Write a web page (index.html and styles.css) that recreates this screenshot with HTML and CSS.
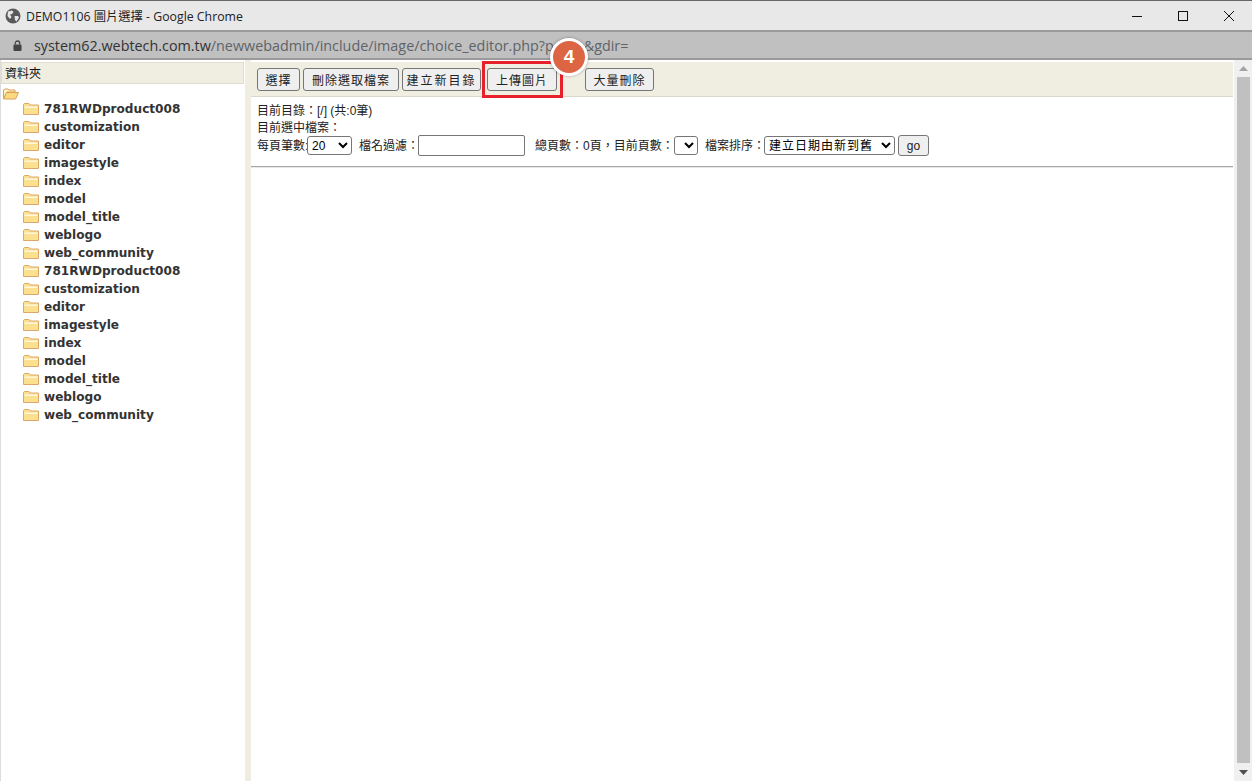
FILE: index.html
```html
<!DOCTYPE html>
<html lang="zh-TW">
<head>
    <meta charset="UTF-8">
    <title>DEMO1106 圖片選擇 - Google Chrome</title>
    <link rel="stylesheet" href="styles.css">
</head>
<body>
    <!-- window title -->
    <header class="titlebar">
        <svg class="globe" width="16" height="16" viewBox="0 0 16 16">
            <circle cx="8" cy="8" r="7.5" fill="#5a5a5a"/>
            <path d="M3 3.5 L7 2.5 L8.5 4 L7 6 L5 6.5 L6.5 9 L5 11 L2.5 8 Z M9.5 8 L13 8 L14 9.5 L11.5 13.5 L10 12 Z" fill="#e6e6e6"/>
        </svg>
        <span class="title-text">DEMO1106 圖片選擇 - Google Chrome</span>
        <div class="win-btns">
            <svg width="12" height="12" viewBox="0 0 12 12"><path d="M1 6.5H11" stroke="#111" fill="none"/></svg>
            <svg width="12" height="12" viewBox="0 0 12 12"><rect x="1.5" y="1.5" width="9" height="9" stroke="#111" fill="none"/></svg>
            <svg width="12" height="12" viewBox="0 0 12 12"><path d="M1 1L11 11M11 1L1 11" stroke="#111" fill="none"/></svg>
        </div>
    </header>

    <!-- address bar -->
    <div class="urlbar">
        <svg width="9" height="11" viewBox="0 0 10 12">
            <path d="M2.5 5V3.5a2.5 2.5 0 0 1 5 0V5" stroke="#444" stroke-width="1.4" fill="none"/>
            <rect x="0.5" y="5" width="9" height="7" rx="1" fill="#444"/>
        </svg>
        <span class="url"><span class="host">system62.webtech.com.tw</span>/newwebadmin/include/image/choice_editor.php?para=&amp;gdir=</span>
    </div>

    <div class="frames">
        <!-- folder tree -->
        <aside class="sidebar">
            <div class="side-head">資料夾</div>
            <svg class="root-folder" width="16" height="12" viewBox="0 0 16 12">
                <path d="M0.5 11V2L1.5 1H5L6 2H12V4H4L0.5 11Z" fill="#fff3c4" stroke="#d9a05b"/>
                <path d="M0.5 11L3.5 4.5H15.5L12.5 11Z" fill="#fbd97f" stroke="#d9a05b"/>
            </svg>
            <ul class="tree" id="tree"></ul>
        </aside>

        <div class="splitter"></div>

        <main class="content">
            <div class="toolbar">
                <button class="btn btn-pick">選擇</button>
                <button class="btn btn-del">刪除選取檔案</button>
                <button class="btn btn-dir">建立新目錄</button>
                <button class="btn btn-upload">上傳圖片</button>
                <button class="btn btn-bulk">大量刪除</button>
            </div>
            <div class="info">
                <div>目前目錄：[/] (共:0筆)</div>
                <div class="info-sel">目前選中檔案：</div>
                <div class="filters">
                    <span class="lbl-num">每頁筆數:</span>
                    <select class="sel sel-num"><option>20</option></select>
                    <span class="lbl-name">檔名過濾：</span>
                    <input class="name-input" type="text">
                    <span class="lbl-pages">總頁數：0頁，目前頁數：</span>
                    <select class="sel sel-page"></select>
                    <span class="lbl-sort">檔案排序：</span>
                    <select class="sel sel-sort"><option>建立日期由新到舊</option></select>
                    <button class="btn btn-go">go</button>
                </div>
            </div>
            <hr class="rule">
        </main>

        <div class="scrollbar">
            <svg width="9" height="5" viewBox="0 0 9 5"><path d="M4.5 0L9 5H0Z" fill="#a3a3a3"/></svg>
            <div class="thumb"></div>
            <svg width="9" height="5" viewBox="0 0 9 5"><path d="M0 0H9L4.5 5Z" fill="#505050"/></svg>
        </div>
    </div>

    <!-- tutorial marks over the screenshot -->
    <div class="mark-box"></div>
    <div class="mark-num">4</div>

    <script>
        const names = ['781RWDproduct008', 'customization', 'editor', 'imagestyle', 'index', 'model', 'model_title', 'weblogo', 'web_community'];
        const icon = '<svg width="16" height="12" viewBox="0 0 16 12"><path d="M0.5 11.5V1.5L1.5 0.5H6L7 2H15.5V11.5Z" fill="#fbe08f" stroke="#dba869"/><path d="M1.5 3.5H14.5V5H1.5Z" fill="#fff8dc"/></svg>';
        // the list shows up twice in the reference
        document.getElementById('tree').innerHTML = names.concat(names)
            .map(n => `<li>${icon}<span>${n}</span></li>`).join('');
    </script>
</body>
</html>
```
FILE: styles.css
```css
html, body {
    height: 100%;
}

body {
    margin: 0;
    height: 781px;
    overflow: hidden;
    display: flex;
    flex-direction: column;
    position: relative;
    background: #fff;
    font-family: "Liberation Sans", "Noto Sans CJK TC", sans-serif;
    font-size: 12px;
    color: #222;
}

/* window title */
.titlebar {
    height: 29px;
    flex: none;
    display: flex;
    align-items: center;
    padding-left: 5px;
    background: #e8e8e8;
    border-top: 1px solid #666;
}

.globe {
    margin-right: 5px;
}

.title-text {
    font-family: "Open Sans", "Noto Sans CJK TC", sans-serif;
    font-size: 12.3px;
    color: #222;
}

.win-btns {
    margin-left: auto;
    display: flex;
    gap: 34px;
    padding-right: 17px;
}

/* address bar */
.urlbar {
    height: 26px;
    flex: none;
    display: flex;
    align-items: center;
    gap: 12px;
    padding-left: 13px;
    background: #c0c0c0;
    border-top: 2px solid #9a9a9a;
    border-bottom: 2px solid #9a9a9a;
    box-sizing: content-box;
}

.url {
    font-family: "Open Sans", sans-serif;
    font-size: 14.35px;
    color: #5f6368;
}

.host {
    color: #333;
}

.frames {
    flex: 1;
    display: flex;
    min-height: 0;
}

/* folder tree */
.sidebar {
    width: 245px;
    flex: none;
    box-sizing: border-box;
    padding: 2px 1px 0 0;
    border-left: 1px solid #ddd;
    font-size: 12px;
}

.side-head {
    height: 22px;
    line-height: 23px;
    padding-left: 3px;
    background: #f0eee1;
    border: 1px solid #e0ddd0;
    box-sizing: border-box;
    color: #111;
}

.root-folder {
    display: block;
    margin: 4px 0 0 2px;
}

.tree {
    list-style: none;
    margin: 0;
    padding: 0 0 0 22px;
}

.tree li {
    height: 18px;
    display: flex;
    align-items: center;
    gap: 5px;
    font-family: "DejaVu Sans", sans-serif;
    font-weight: bold;
    font-size: 12.1px;
    color: #333;
}

.splitter {
    width: 6px;
    flex: none;
    background: #f0eee1;
}

/* right frame */
.content {
    flex: 1;
    min-width: 0;
    padding-top: 2px;
}

.toolbar {
    height: 35px;
    box-sizing: border-box;
    display: flex;
    align-items: center;
    gap: 3px;
    padding-left: 6px;
    background: #f0eee1;
    border-bottom: 1px solid #dcd9cc;
}

.btn {
    height: 23px;
    padding: 0;
    border: 1px solid #777;
    border-radius: 3px;
    background: #efefef;
    font-family: "Liberation Sans", "Noto Sans CJK TC", sans-serif;
    font-size: 12px;
    letter-spacing: 1px;
    color: #222;
}

.btn-pick {
    width: 43px;
}

.btn-del {
    width: 96px;
}

.btn-dir {
    width: 79px;
    letter-spacing: 2px;
}

.btn-upload {
    width: 70px;
    margin-left: 3px;
}

.btn-bulk {
    width: 69px;
    margin-left: 25px;
}

.btn-go {
    width: 31px;
    height: 21px;
    margin-left: 3px;
    letter-spacing: 0;
}

.info {
    padding: 6px 0 0 6px;
    line-height: 16px;
}

.info-sel {
    margin-top: 1px;
}

.filters {
    display: flex;
    align-items: center;
    margin-top: -1px;
}

.sel {
    height: 19px;
    box-sizing: border-box;
    border: 1px solid #767676;
    border-radius: 3px;
    background: #fff;
    font-family: "Liberation Sans", "Noto Sans CJK TC", sans-serif;
    font-size: 12px;
}

.lbl-num {
    width: 50px;
    white-space: nowrap;
}

.sel-num {
    width: 45px;
}

.lbl-name {
    width: 59px;
    margin-left: 7px;
    white-space: nowrap;
}

.name-input {
    width: 107px;
    height: 21px;
    box-sizing: border-box;
    border: 1px solid #767676;
    border-radius: 2px;
}

.lbl-pages {
    width: 139px;
    margin-left: 10px;
    white-space: nowrap;
}

.sel-page {
    width: 24px;
}

.lbl-sort {
    width: 59px;
    margin-left: 7px;
    white-space: nowrap;
}

.sel-sort {
    width: 131px;
    letter-spacing: 1px;
}

.rule {
    margin: 10px 0 0;
    border: 0;
    border-top: 1px solid #a8a8a8;
    border-bottom: 1px solid #e8e8e8;
}

/* scrollbar */
.scrollbar {
    width: 18px;
    flex: none;
    margin-left: 1px;
    display: flex;
    flex-direction: column;
    align-items: center;
    background: #f0f0f0;
    box-sizing: border-box;
    padding: 6px 0;
}

.thumb {
    width: 13px;
    flex: 1;
    margin: 6px 0 7px;
    background: #c0c0c0;
}

/* tutorial marks */
.mark-box {
    position: absolute;
    left: 482px;
    top: 61px;
    width: 81px;
    height: 37px;
    box-sizing: border-box;
    border: 3px solid #e8202c;
}

.mark-num {
    position: absolute;
    left: 550px;
    top: 38px;
    width: 38px;
    height: 38px;
    box-sizing: border-box;
    border: 3px solid #fff;
    border-radius: 50%;
    background: #dc6544;
    box-shadow: 0 0 3px rgba(0, 0, 0, 0.35);
    color: #fff;
    font-family: "Liberation Sans", sans-serif;
    font-weight: bold;
    font-size: 19px;
    line-height: 32px;
    text-align: center;
}
```
